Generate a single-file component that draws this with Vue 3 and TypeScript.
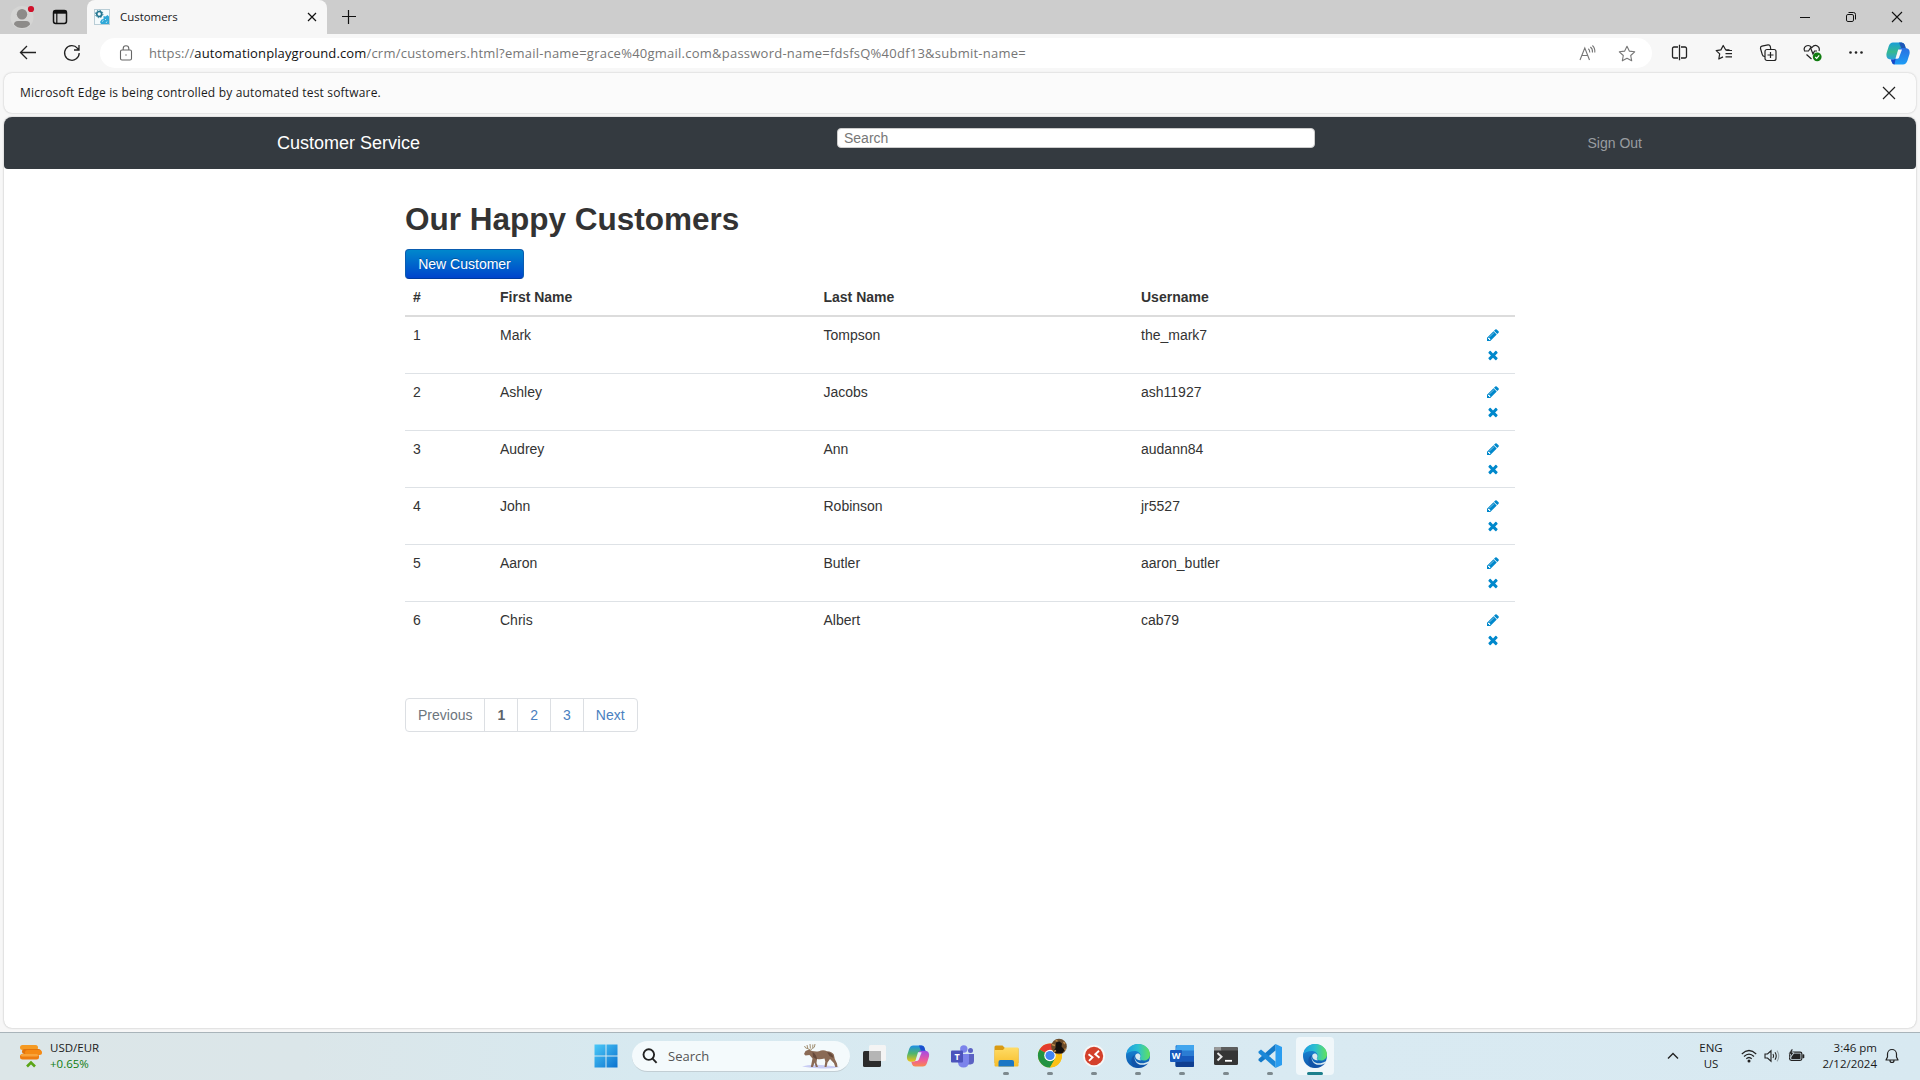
<script setup lang="ts">
interface Customer {
  id: number
  first: string
  last: string
  user: string
}

const customers: Customer[] = [
  { id: 1, first: 'Mark', last: 'Tompson', user: 'the_mark7' },
  { id: 2, first: 'Ashley', last: 'Jacobs', user: 'ash11927' },
  { id: 3, first: 'Audrey', last: 'Ann', user: 'audann84' },
  { id: 4, first: 'John', last: 'Robinson', user: 'jr5527' },
  { id: 5, first: 'Aaron', last: 'Butler', user: 'aaron_butler' },
  { id: 6, first: 'Chris', last: 'Albert', user: 'cab79' },
]
</script>

<template>
  <div class="screen">
    <svg class="defs" width="0" height="0">
      <defs>
        <linearGradient id="edgeA" x1="0" y1="0" x2="1" y2="0">
          <stop offset="0" stop-color="#1b9de2" />
          <stop offset=".5" stop-color="#2cc0d0" />
          <stop offset="1" stop-color="#62e25a" />
        </linearGradient>
        <linearGradient id="edgeB" x1="0" y1="0" x2="0" y2="1">
          <stop offset="0" stop-color="#1b8fdc" />
          <stop offset="1" stop-color="#0d57ac" />
        </linearGradient>
        <linearGradient id="win" x1="0" y1="0" x2="1" y2="1">
          <stop offset="0" stop-color="#4cc9f8" />
          <stop offset="1" stop-color="#0b72cf" />
        </linearGradient>
        <linearGradient id="cpL" x1="0" y1="0" x2="0" y2="1">
          <stop offset="0" stop-color="#1a9ed8" />
          <stop offset=".55" stop-color="#35b98f" />
          <stop offset="1" stop-color="#2a9fdd" />
        </linearGradient>
        <linearGradient id="cpR" x1="0" y1="0" x2="0" y2="1">
          <stop offset="0" stop-color="#2b6fe0" />
          <stop offset="1" stop-color="#1d9df5" />
        </linearGradient>
        <linearGradient id="cpL2" x1="0" y1="0" x2="0" y2="1">
          <stop offset="0" stop-color="#1d8fe8" />
          <stop offset=".5" stop-color="#4fb56c" />
          <stop offset="1" stop-color="#f2c414" />
        </linearGradient>
        <linearGradient id="cpR2" x1="0" y1="0" x2="0" y2="1">
          <stop offset="0" stop-color="#a04be8" />
          <stop offset=".6" stop-color="#ee5a9a" />
          <stop offset="1" stop-color="#f98a4c" />
        </linearGradient>
        <linearGradient id="folder" x1="0" y1="0" x2="0" y2="1">
          <stop offset="0" stop-color="#ffdc66" />
          <stop offset="1" stop-color="#f7bd29" />
        </linearGradient>
        <symbol id="edge" viewBox="0 0 24 24">
          <circle cx="12" cy="12" r="12" fill="url(#edgeB)" />
          <path d="M.3 10.500C1.400 4 6.200 0 12 0c7 0 12 5 12 10.400 0 3.600-2.800 6.100-6 6.100-2.600 0-4.200-1-4.200-1.900 0-.6.900-1.100.9-2.700 0-2.700-2.600-4.900-6-4.900C5 7 1.600 8.400.3 10.500z" fill="url(#edgeA)" />
          <path d="M8.900 10.800c-1.500 4.500 1.500 10.200 7.400 10.400 2.400 0 4.500-.7 6.200-2.100C20.300 22.100 16.500 24 12.600 24 8 23.900 5.400 20.600 5.400 16.800c0-2.800 1.300-4.900 3.500-6z" fill="#1250a4" opacity=".75" />
          <path d="M9.200 11c-1 2.200-.4 4.500 1.200 6.200 2.600 2.700 7.600 2.900 11.800.4.700-.4 1.100.2.700.9-3 2.900-9.300 3.200-12.100.4-2.300-2.200-2.800-5.500-1.600-7.900z" fill="#d9eaf1" />
          <path d="M9.300 11.200c.7-1.500 2.600-2.100 4-1.300 1.300.9 1.500 2.700.8 3.800-.7 1-.1 2 1.400 2.600-3.300.5-6.800-1.700-6.200-5.100z" fill="#d9eaf1" />
        </symbol>
      </defs>
    </svg>

    <header class="tabstrip">
      <svg class="avatar" width="26" height="26" viewBox="0 0 26 26">
        <circle cx="12" cy="13.500" r="11.500" fill="#d5d5d4" />
        <circle cx="12" cy="10.300" r="5.200" fill="#8d8b89" />
        <path d="M4 20.500q0-3.500 4-3.500h8q4 0 4 3.500-3 3.500-8 3.500t-8-3.500z" fill="#8d8b89" />
        <circle cx="21" cy="5" r="3.100" fill="#d0112b" />
      </svg>
      <svg class="tabs-icon" width="16" height="16" viewBox="0 0 16 16" fill="none" stroke="#111" stroke-width="1.500">
        <rect x="1.500" y="1.500" width="13" height="13" rx="2.200" />
        <path d="M1.500 3.200h13" stroke-width="3" />
        <path d="M4.800 3v11.500" stroke-width="1.200" />
      </svg>
      <div class="tab">
        <svg width="16" height="16" viewBox="0 0 16 16">
          <rect x=".5" y=".5" width="15" height="15" fill="#f4fafc" stroke="#b9cdd6" />
          <circle cx="5.200" cy="5" r="2.500" fill="none" stroke="#227590" stroke-width="1.700" />
          <circle cx="5.200" cy="5" r="3.700" fill="none" stroke="#227590" stroke-width="1" stroke-dasharray="1.400 1.500" />
          <path d="M9.500 7l2 .5L13.500 6l1.500 1.500v7.500H7l-1-2 1.500-2.500 2-.5z" fill="#30a8d8" />
          <path d="M8 12.500l1.500-1M11 10l1 1M12 14l1-1.500" stroke="#bfe6f5" stroke-width="1" />
        </svg>
        <span class="tab-title">Customers</span>
        <svg class="tab-x" width="10" height="10" viewBox="0 0 10 10" stroke="#111" stroke-width="1.200"><path d="M1 1l8 8M9 1L1 9" /></svg>
      </div>
      <svg class="plus" width="14" height="14" viewBox="0 0 14 14" stroke="#111" stroke-width="1.200"><path d="M0 6.500h14M6.500 0v14" /></svg>
      <div class="winctl">
        <svg width="12" height="12" viewBox="0 0 12 12" stroke="#111"><path d="M1 6.500h10" /></svg>
        <svg width="12" height="12" viewBox="0 0 12 12" stroke="#111" fill="none">
          <rect x="1.500" y="3.500" width="7" height="7" rx="1.400" />
          <path d="M3.500 1.500h5a2 2 0 0 1 2 2v5" />
        </svg>
        <svg width="12" height="12" viewBox="0 0 12 12" stroke="#111" stroke-width="1.100"><path d="M1 1l10 10M11 1L1 11" /></svg>
      </div>
    </header>

    <div class="toolbar">
      <svg class="back" width="18" height="16" viewBox="0 0 18 16" fill="none" stroke="#222" stroke-width="1.300"><path d="M17 7.500H2M8 1L1.500 7.500 8 14" /></svg>
      <svg class="reload" width="18" height="18" viewBox="0 0 18 18" fill="none" stroke="#222" stroke-width="1.300">
        <path d="M16.200 9A7.300 7.300 0 1 1 14.500 4.300L16 6M16 1v5h-5" />
      </svg>
      <div class="omnibox">
        <svg class="lock" width="14" height="16" viewBox="0 0 14 16" fill="none" stroke="#666" stroke-width="1.100">
          <rect x="1.500" y="5" width="11" height="10" rx="1.500" />
          <path d="M4.200 5V3.500a2.800 2.800 0 0 1 5.600 0V5" />
          <circle cx="7" cy="10" r=".7" fill="#666" stroke="none" />
        </svg>
        <span class="url"><b>https://</b><b class="host">automationplayground.com</b>/crm/customers.html?email-name=grace%40gmail.com&amp;password-name=fdsfsQ%40df13&amp;submit-name=</span>
        <svg class="read" width="17" height="16" viewBox="0 0 17 16" fill="none" stroke="#777" stroke-width="1.100">
          <path d="M1 15L5.800 3 10.500 15M2.800 10.500h6M9.300 3.800q1.500 1.200 1.500 3.700M11.300 2q2.500 1.500 2.200 5.500M13.400.5q2.800 2.500 2.400 7" />
        </svg>
        <svg class="fav" width="18" height="17" viewBox="0 0 18 17" fill="none" stroke="#777" stroke-width="1.100">
          <path d="M9 1.200l2.300 4.900 5.400.7-4 3.700 1 5.300L9 13.200l-4.700 2.600 1-5.300-4-3.700 5.400-.7z" stroke-linejoin="round" />
        </svg>
      </div>
      <div class="tools">
        <svg width="18" height="18" viewBox="0 0 18 18" fill="none" stroke="#222" stroke-width="1.300">
          <path d="M7 3H3A1.500 1.500 0 0 0 1.500 4.500v8A1.500 1.500 0 0 0 3 14H7M10 3h4A1.500 1.500 0 0 1 15.500 4.500v8a1.500 1.500 0 0 1-1.500 1.500h-4M8.500 .8v15.400" />
        </svg>
        <svg width="18" height="18" viewBox="0 0 18 18" fill="none" stroke="#222" stroke-width="1.200">
          <path d="M14.500 5.900l-4-.4L8.200 1.500 5.900 5.900l-4.700.7 3.500 3.300-.9 5.100 4.200-2.100M10.500 6.500H17M10.500 9.700H17M10.500 12.900H17" stroke-linejoin="round" />
        </svg>
        <svg width="18" height="18" viewBox="0 0 18 18" fill="none" stroke="#222" stroke-width="1.200">
          <rect x="6" y="5.500" width="11" height="11" rx="2" />
          <path d="M11.500 8v6M8.500 11h6M6 12.500q-2.200.2-2.700-1.900L1.500 4.500Q1.200 2.700 2.900 2.200L9 .9q1.800-.2 2.300 1.600l.5 3" />
        </svg>
        <svg width="19" height="18" viewBox="0 0 19 18" fill="none" stroke="#222" stroke-width="1.200">
          <path d="M1.500 6.500C0 2.800 5 -.8 8.800 3.600 12.500-.8 17.500 2.500 16 7M1 7h4.500l2-3.200L10 10l1.500-3H14M3.500 10.500L8.500 15" />
          <circle cx="14.200" cy="12.800" r="4.400" fill="#107c10" stroke="none" />
          <path d="M12.200 13l1.500 1.400 2.500-3" stroke="#fff" />
        </svg>
        <svg width="18" height="18" viewBox="0 0 18 18" fill="#222"><circle cx="2.500" cy="8.500" r="1.300" /><circle cx="8" cy="8.500" r="1.300" /><circle cx="13.500" cy="8.500" r="1.300" /></svg>
        <svg class="cp" width="24" height="23" viewBox="0 0 24 23">
          <path d="M7 .5h8.500q2.500 0 3.300 2.500l1.200 4h-5q-2 0-2.700 2L10 15.500Q9.200 17.500 7 17.500H4.500Q-.5 17 .6 11L2.800 4Q4 .5 7 .5z" fill="url(#cpL)" />
          <path d="M13 .5h2.500q2.500 0 3.300 2.500l1.200 4h-4.500z" fill="#1d56b8" />
          <path d="M17 22.500H9q-2.500 0-3.200-2.500L5 17.500h2.300q2.200 0 2.900-2.200L12.400 8q.7-2 2.800-2h4.300q5 .5 4 6l-2.100 6.800q-1.200 3.700-4.400 3.700z" fill="url(#cpR)" />
          <path d="M12.200 7.500h3.800l-3 8q-.5 1.200-1.800 1.200H9.500z" fill="#f7f7f7" />
          <path d="M5 17.500h2.300q1.600 0 2.400-1.200l-1.200 6.200Q6.500 22.500 5.800 20z" fill="#1747c7" />
        </svg>
      </div>
    </div>

    <div class="infobar">
      <span class="infotext">Microsoft Edge is being controlled by automated test software.</span>
      <svg width="14" height="14" viewBox="0 0 14 14" stroke="#222" stroke-width="1.200"><path d="M1 1l12 12M13 1L1 13" /></svg>
    </div>

    <main class="page">
      <nav class="navbar">
        <span class="brand">Customer Service</span>
        <div class="search">Search</div>
        <span class="signout">Sign Out</span>
      </nav>
      <section class="content">
        <h2>Our Happy Customers</h2>
        <button class="btn">New Customer</button>
        <div class="row head"><span>#</span><span>First Name</span><span>Last Name</span><span>Username</span></div>
        <div v-for="c in customers" :key="c.id" class="row">
          <span>{{ c.id }}</span><span>{{ c.first }}</span><span>{{ c.last }}</span><span>{{ c.user }}</span>
          <div class="actions">
            <svg width="14" height="20" viewBox="0 -384 1792 2560"><path d="M491 1536l91-91-235-235-91 91v107h128v128h107zm523-928q0-22-22-22-10 0-17 7l-542 542q-7 7-7 17 0 22 22 22 10 0 17-7l542-542q7-7 7-17zm-54-192l416 416-832 832h-416v-416zm683 96q0 53-37 90l-166 166-416-416 166-165q36-38 90-38 53 0 91 38l235 234q37 39 37 91z" /></svg>
            <svg width="14" height="20" viewBox="0 -384 1792 2560"><path d="M1490 1322q0 40-28 68l-136 136q-28 28-68 28t-68-28l-294-294-294 294q-28 28-68 28t-68-28l-136-136q-28-28-28-68t28-68l294-294-294-294q-28-28-28-68t28-68l136-136q28-28 68-28t68 28l294 294 294-294q28-28 68-28t68 28l136 136q28 28 28 68t-28 68l-294 294 294 294q28 28 28 68z" /></svg>
          </div>
        </div>
        <div class="pager">
          <span class="off">Previous</span><span class="cur">1</span><span>2</span><span>3</span><span>Next</span>
        </div>
      </section>
    </main>

    <footer class="taskbar">
      <div class="widget">
        <svg width="24" height="26" viewBox="0 0 24 26">
          <rect x="1" y="2" width="18" height="5" rx="2.500" fill="#f59a23" />
          <rect x="3" y="6" width="19" height="5" rx="2.500" fill="#e2740c" />
          <rect x="6" y="7" width="17" height="5" rx="2.500" fill="#f58a14" />
          <rect x="1" y="11" width="19" height="5.500" rx="2.500" fill="#ee7d10" />
          <rect x="2" y="11" width="17" height="2.500" rx="1.200" fill="#f9a43a" />
          <path d="M8 23.500l4-4 4 4" fill="none" stroke="#5aa516" stroke-width="2.600" />
        </svg>
        <div class="rates"><span class="pair">USD/EUR</span><span class="up">+0.65%</span></div>
      </div>

      <div class="dock">
        <div class="slot start">
          <svg width="24" height="24" viewBox="0 0 24 24" fill="url(#win)"><path d="M.5.500h11v11H.5zM12.500.500h11v11h-11zM.5 12.500h11v11H.5zM12.500 12.500h11v11h-11z" /></svg>
        </div>
        <div class="find">
          <svg width="16" height="16" viewBox="0 0 16 16" fill="none" stroke="#222" stroke-width="1.900"><circle cx="6.800" cy="6.600" r="5.300" /><path d="M10.600 10.600L14.600 14.800" /></svg>
          <span class="findtext">Search</span>
          <svg class="moose" width="40" height="26" viewBox="0 0 40 26">
            <path d="M1 23.500Q8 21 20 22t19 2q-8 2-19 1.500T1 23.500z" fill="#c9cdf4" />
            <path d="M4.500 8L8 6.500 11 8q4 .8 7 .2 4-1.700 8 0 5 .3 6.800 3.300l1 4.500 2.200 4.500.5 3.500h-2.200l-1.300-3.800-4-4.200-2.500 3.500-1 4.500h-2l.8-5.500-.8-3q-4 1.200-7.500.5L15.500 20l1.500 4h-2.200l-1.300-4.500L12 24h-2.200l1-5 .7-3.500L8.500 12l-4 .5L3 11z" fill="#8a6a55" />
            <path d="M11.500 9q4 2 4.500 7.500l-4-2.500zM26 9q6 1 6.500 6l-4-2z" fill="#66493a" />
            <path d="M3.500 3q.5 2.500 3.500 2.700L9.500 7 11.500 5.500Q14 5 14 1M6 2l.7 3M9 1l.4 4.500M11.800 1.500v3.500" fill="none" stroke="#a08f72" stroke-width="1" />
          </svg>
        </div>
        <div class="slot">
          <svg width="24" height="22" viewBox="0 0 24 22">
            <rect x="7" y="0" width="17" height="16" rx="1.500" fill="#f4f4f4" />
            <rect x="1" y="6" width="18" height="16" rx="1.500" fill="#2b2b2b" />
            <path d="M7 6h12v10H8.500Q7 16 7 14.500z" fill="#b5b5b5" />
          </svg>
        </div>
        <div class="slot">
          <svg width="24" height="22" viewBox="0 0 24 23">
            <path d="M7 .5h8.500q2.500 0 3.300 2.500l1.200 4h-5q-2 0-2.700 2L10 15.500Q9.200 17.500 7 17.500H4.500Q-.5 17 .6 11L2.800 4Q4 .5 7 .5z" fill="url(#cpL2)" />
            <path d="M13 .5h2.500q2.500 0 3.300 2.500l1.200 4h-4.500z" fill="#1c4fd0" />
            <path d="M17 22.500H9q-2.500 0-3.200-2.500L5 17.500h2.300q2.200 0 2.900-2.200L12.400 8q.7-2 2.800-2h4.300q5 .5 4 6l-2.100 6.800q-1.200 3.700-4.400 3.700z" fill="url(#cpR2)" />
            <path d="M12 7.500h3.800l-3 8q-.5 1.200-1.800 1.200H9.300z" fill="#e2eff4" />
          </svg>
        </div>
        <div class="slot">
          <svg width="24" height="24" viewBox="0 0 24 24">
            <circle cx="20.500" cy="6.500" r="2.500" fill="#5b62c3" />
            <path d="M17 10h7v7q0 3-3.500 3.500H17z" fill="#5b62c3" />
            <circle cx="13.800" cy="5" r="3.700" fill="#7b83eb" />
            <path d="M8 10h11v8q-.5 5.500-5.500 5.500T8 18.500z" fill="#7b83eb" />
            <rect x="1" y="6.500" width="12" height="12" rx="1" fill="#4b53bc" />
            <text x="7" y="15.600" class="glyph" font-size="9">T</text>
          </svg>
        </div>
        <div class="slot run">
          <svg width="25" height="22" viewBox="0 0 25 22">
            <path d="M.5 2Q.5.500 2 .500h6.500L11 3h12.500q1 0 1 1V18H.5z" fill="#d99a13" />
            <path d="M.5 5H9l2-2.500h12.500q1 0 1 1V20.500q0 1-1 1h-22q-1 0-1-1z" fill="url(#folder)" />
            <path d="M4.500 21.500V17q0-2 2-2h11.500q2 0 2 2v4.500z" fill="#1a76c4" />
          </svg>
        </div>
        <div class="slot run">
          <svg class="chrome" width="30" height="30" viewBox="0 0 30 30">
            <circle cx="13" cy="17.500" r="12" fill="#fbc116" />
            <path d="M13 17.500L2.600 11.500A12 12 0 0 1 23.400 11.500z" fill="#e33b2e" />
            <path d="M13 17.500L2.600 11.500A12 12 0 0 0 13 29.500L18.200 20.500z" fill="#229342" />
            <path d="M13 12h10.700q1.800 4 1.100 8-2.300 9.300-11.800 9.500l5.200-9z" fill="#fbc116" />
            <circle cx="13" cy="17.500" r="5.800" fill="#fff" />
            <circle cx="13" cy="17.500" r="4.600" fill="#4285f4" />
            <circle cx="22" cy="8.500" r="7.800" fill="#6b4b2a" />
            <path d="M19 4.500l3.500-1 2.500 2-.5 3 3 3.500-2 3h-7l-2-2 2-3z" fill="#15110e" />
            <path d="M15 6.500l3 1M26.500 4l1.500 2M17 13.500l2-1M18.500 2.500l2 .5M27.500 11l1.500.5" stroke="#c08a48" stroke-width="1.500" />
          </svg>
        </div>
        <div class="slot run">
          <svg width="22" height="22" viewBox="0 0 22 22">
            <circle cx="11" cy="11" r="11" fill="#f7f7f7" /><circle cx="11" cy="11" r="9.200" fill="#d4402b" />
            <path d="M5.500 9.300l4 3L6 15.800M16 5.800L12.300 9.200l4.200 3.600" fill="none" stroke="#fff" stroke-width="1.900" />
          </svg>
        </div>
        <div class="slot run"><svg width="24" height="24"><use href="#edge" /></svg></div>
        <div class="slot run">
          <svg width="24" height="22" viewBox="0 0 24 22">
            <rect x="5.500" width="18.500" height="22" rx="1.500" fill="#2b7cd3" />
            <path d="M5.500 5.500H24V0H7z" fill="#41a5ee" /><path d="M5.500 11H24v5.500H5.500z" fill="#185abd" /><path d="M5.500 16.500H24V21q0 1-1 1H7q-1.500 0-1.500-1.500z" fill="#103f91" />
            <rect y="5" width="12" height="12" rx="1" fill="#185abd" />
            <text x="6" y="14.200" class="glyph" font-size="9">W</text>
          </svg>
        </div>
        <div class="slot run">
          <svg width="24" height="20" viewBox="0 0 24 20">
            <rect y="1" width="24" height="18" rx="1.500" fill="#353535" /><path d="M1.500 1h6v3.500H0V2.500Q0 1 1.500 1z" fill="#999" /><path d="M7.500 1h15Q24 1 24 2.500v2H7.500z" fill="#5d5d5d" />
            <path d="M3.500 7l4 3.700-4 3.700" fill="none" stroke="#e6e6e6" stroke-width="2" /><path d="M11 14.800h7" stroke="#fff" stroke-width="1.800" />
          </svg>
        </div>
        <div class="slot run">
          <svg width="24" height="24" viewBox="0 0 24 24">
            <path d="M17.500 0L24 3v18l-6.500 3z" fill="#2a9df0" />
            <path d="M17.500 0v6.500L3 18.500.5 16.500v-1.500z" fill="#1479c8" />
            <path d="M17.500 24v-6.500L3 5.500.5 7.500V9z" fill="#1b88d8" />
          </svg>
        </div>
        <div class="slot run active"><svg width="24" height="24"><use href="#edge" /></svg></div>
      </div>

      <div class="tray">
        <svg class="chev" width="12" height="8" viewBox="0 0 12 8" fill="none" stroke="#222" stroke-width="1.400"><path d="M1 6.500l5-5 5 5" /></svg>
        <div class="lang"><span>ENG</span><span>US</span></div>
        <svg class="wifi" width="16" height="14" viewBox="0 0 16 14" fill="none" stroke="#222" stroke-width="1.200">
          <path d="M.8 5q7.200-7 14.400 0M3 7.500q5-4.800 10 0M5.300 9.800q2.700-2.600 5.400 0" /><circle cx="8" cy="12" r="1.500" fill="#222" stroke="none" />
        </svg>
        <svg class="vol" width="16" height="14" viewBox="0 0 16 14" fill="none" stroke="#222" stroke-width="1.100">
          <path d="M1 5v4h2.500L7 12.200V1.800L3.500 5zM9 5q1.300 2 0 4M11 3.300q2.500 3.700 0 7.400" /><path d="M13 1.600q3.500 5.400 0 10.800" stroke="#9aa6ac" />
        </svg>
        <svg class="bat" width="17" height="14" viewBox="0 0 17 14">
          <rect x="1.600" y="3.100" width="12.300" height="8.300" rx="1.800" fill="none" stroke="#222" stroke-width="1.200" /><path d="M6 4.500h6.500V10H3.300V8z" fill="#222" /><rect x="14.500" y="5.200" width="1.800" height="4" rx=".8" fill="#222" />
          <path d="M3.500 0L.5 5h2L2 8.500 6 3.500H4L5 0z" fill="#222" stroke="#dae8f0" stroke-width=".5" />
        </svg>
        <div class="clock"><span class="time">3:46 pm</span><span class="date">2/12/2024</span></div>
        <svg class="bell" width="14" height="16" viewBox="0 0 14 16" fill="none" stroke="#222" stroke-width="1.200">
          <path d="M1 12h12l-1.500-3V6a4.500 4.500 0 0 0-9 0v3zM5 12.500a2 2 0 0 0 4 0" stroke-linejoin="round" />
        </svg>
      </div>
    </footer>
  </div>
</template>

<style>
body { margin: 0; overflow: hidden; }
</style>

<style scoped>
.screen {
  width: 1920px;
  height: 1080px;
  display: flex;
  flex-direction: column;
  background: #f7f7f7;
  font-family: "Open Sans", "Noto Sans", sans-serif;
  color: #1a1a1a;
  overflow: hidden;
}
svg { display: block; flex: none; }
.defs { position: absolute; }
.screen span { white-space: nowrap; }

.tabstrip { height: 34px; flex: none; display: flex; align-items: center; background: #cdcdcd; }
.avatar { margin-left: 10px; }
.tabs-icon { margin-left: 16px; }
.tab {
  width: 240px;
  height: 34px;
  margin-left: 19px;
  box-sizing: border-box;
  display: flex;
  align-items: center;
  padding: 0 10px 0 7px;
  background: #f7f7f7;
  border-radius: 8px 8px 0 0;
}
.tab-title { margin: -1px 0 0 10px; font-size: 11.500px; letter-spacing: -.05px; }
.tab-x { margin-left: auto; }
.plus { margin-left: 15px; }
.winctl { margin-left: auto; margin-right: 17px; display: flex; gap: 34px; }

.toolbar { height: 38px; flex: none; display: flex; align-items: center; }
.back { margin-left: 19px; }
.reload { margin-left: 26px; }
.omnibox {
  width: 1552px;
  height: 30px;
  margin-left: 19px;
  display: flex;
  align-items: center;
  background: #fff;
  border-radius: 15px;
}
.lock { margin-left: 19px; }
.url { width: 1430px; margin-left: 16px; font-size: 13px; color: #767676; letter-spacing: .24px; }
.url b { font-weight: 400; letter-spacing: .12px; }
.url .host { color: #111; }
.fav { margin-left: 22px; }
.tools { flex: 1; margin-left: 19px; display: flex; align-items: center; gap: 26px; }
.cp { margin-left: -6px; }

.infobar {
  height: 40px;
  flex: none;
  margin: 1px 4px 0;
  box-sizing: border-box;
  display: flex;
  align-items: center;
  justify-content: space-between;
  padding: 0 20px 1px 16px;
  background: #fbfbfb;
  border-radius: 8px;
  box-shadow: 0 0 2px rgba(0, 0, 0, .25);
}
.infotext { font-size: 12px; letter-spacing: .18px; }

.page {
  height: 911px;
  flex: none;
  margin: 4px 4px 0;
  background: #fff;
  border-radius: 8px;
  box-shadow: 0 0 2px rgba(0, 0, 0, .3);
  font-family: "Liberation Sans", Arial, sans-serif;
  font-size: 14px;
  line-height: 20px;
  color: #333;
}
.navbar {
  height: 52px;
  display: flex;
  align-items: center;
  background: #343a40;
  border-radius: 8px 8px 4px 4px;
}
.brand { width: 560px; margin-left: 273px; font-size: 18px; color: #fff; }
.search {
  width: 478px;
  height: 20px;
  box-sizing: border-box;
  margin-bottom: 10px;
  padding: 0 6px;
  border: 1px solid #ccc;
  border-radius: 4px;
  background: #fff;
  color: #777;
  line-height: 19px;
}
.signout { margin-left: 272.5px; color: #999da0; }
.content { width: 1110px; margin-left: 401px; padding-top: 30px; }
h2 { margin: 0 0 10px; font-size: 31.5px; line-height: 40px; font-weight: 700; }
.btn {
  display: block;
  width: 119px;
  height: 30px;
  padding: 0;
  border: 1px solid #0a5cb0;
  border-bottom-color: #003a9e;
  border-radius: 4px;
  background: linear-gradient(#0088cc, #0044cc);
  color: #fff;
  font: 14px "Liberation Sans", Arial, sans-serif;
  text-shadow: 0 -1px 0 rgba(0, 0, 0, .25);
}
.row {
  height: 57px;
  box-sizing: border-box;
  display: grid;
  grid-template-columns: 87px 323.5px 317.5px 1fr 29px;
  padding: 8px 0 0 8px;
  border-top: 1px solid #dee2e6;
}
.head { height: 38px; border-top: 0; border-bottom: 2px solid #dcdcdc; font-weight: 700; }
.head + .row { height: 56px; border-top: 0; }
.actions svg { fill: #0088cc; }
.pager { display: flex; margin-top: 40px; }
.pager span {
  height: 34px;
  box-sizing: border-box;
  padding: 6px 12px;
  margin-left: -1px;
  border: 1px solid #dcdfe3;
  color: #4a7fc0;
}
.pager .off { margin-left: 0; color: #6c757d; border-radius: 4px 0 0 4px; }
.pager .cur { color: #5c636a; font-weight: 700; }
.pager span:last-child { border-radius: 0 4px 4px 0; }

.taskbar {
  height: 48px;
  flex: none;
  margin-top: auto;
  box-sizing: border-box;
  border-top: 1px solid #a9b4ba;
  padding-bottom: 1px;
  display: flex;
  align-items: center;
  background: linear-gradient(90deg, #dce6e8 0, #dbe6e9 300px, #d7e9f0 640px, #d9eaf2 1300px, #d8e9f1 100%);
  font-size: 11.5px;
  line-height: 16px;
}
.widget { width: 594px; display: flex; align-items: center; }
.widget svg { margin-left: 19px; }
.rates { margin-left: 7px; display: flex; flex-direction: column; }
.up { color: #107c10; }
.dock { display: flex; align-items: center; height: 46px; }
.slot { width: 44px; height: 38px; display: flex; align-items: center; justify-content: center; position: relative; }
.start { width: 24px; }
.find {
  width: 218px;
  height: 31px;
  box-sizing: border-box;
  margin: 0 2px 0 14px;
  display: flex;
  align-items: center;
  padding: 0 9px 0 10px;
  background: #f4fafc;
  border-radius: 16px;
  border-bottom: 1px solid #c2ced4;
}
.findtext { margin-left: 10px; font-size: 13px; color: #555; }
.moose { margin-left: auto; }
.glyph { fill: #fff; font-family: "Open Sans", sans-serif; font-weight: 700; text-anchor: middle; }
.run::after {
  content: "";
  position: absolute;
  left: 19px;
  bottom: 0;
  width: 6px;
  height: 3px;
  border-radius: 2px;
  background: #7d898e;
}
.chrome { margin: -6px 0 0 4px; }
.active { width: 38px; margin-left: 4px; background: #f0f7fa; border-radius: 4px; }
.active::after { left: 11px; width: 16px; background: #1b7f8c; }

.tray { margin-left: auto; display: flex; align-items: center; }
.lang { width: 24px; margin-left: 20px; display: flex; flex-direction: column; align-items: center; }
.wifi { margin-left: 18px; }
.vol { margin-left: 7px; }
.bat { margin-left: 8px; }
.clock { width: 60px; margin-left: 12px; display: flex; flex-direction: column; align-items: flex-end; }
.bell { margin: 0 21px 0 8px; }
</style>
